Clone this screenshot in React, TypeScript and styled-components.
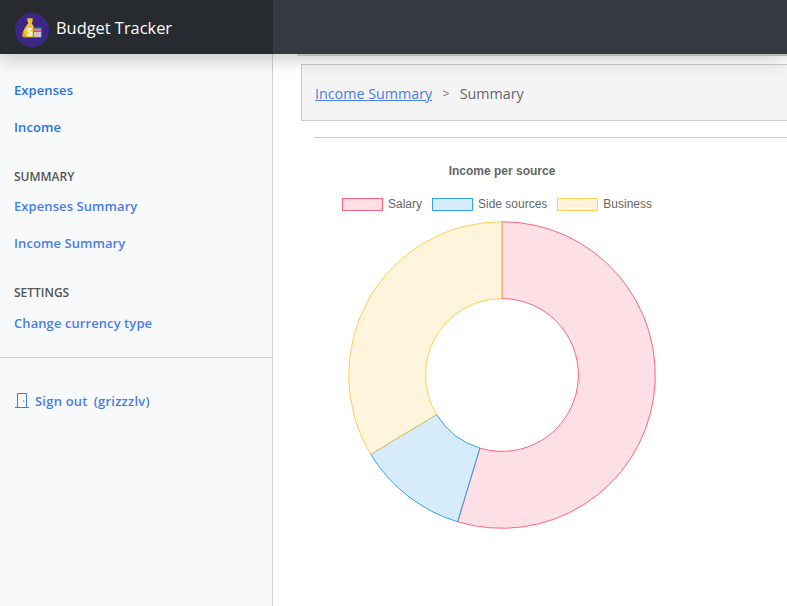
import React from "react";
import styled, { createGlobalStyle } from "styled-components";

const GlobalStyle = createGlobalStyle`
  html, body {
    margin: 0;
    padding: 0;
    height: 100%;
    overflow: hidden;
    background: #fff;
    font-family: "Open Sans", "Noto Sans", sans-serif;
  }
  #root { height: 100%; }
`;

const Page = styled.div`
  width: 787px;
  height: 606px;
  display: flex;
  flex-direction: column;
  overflow: hidden;
`;

const TopBar = styled.header`
  height: 54px;
  flex: none;
  display: flex;
  background: #343a40;
  box-shadow: 0 4px 20px rgba(0, 0, 0, 0.22);
  position: relative;
  z-index: 2;
  &::after {
    content: "";
    position: absolute;
    left: 297px;
    right: 0;
    top: 100%;
    height: 2px;
    background: #b9b9b9;
  }
`;

const Brand = styled.div`
  width: 273px;
  box-sizing: border-box;
  padding-left: 15px;
  display: flex;
  align-items: center;
  gap: 7px;
  background: #272b30;
  color: #fff;
  font-size: 16.4px;
`;

const Logo = styled.svg`
  margin-top: 6px;
  flex: none;
`;

const Body = styled.div`
  flex: 1;
  display: flex;
  min-height: 0;
`;

const Sidebar = styled.aside`
  width: 273px;
  flex: none;
  box-sizing: border-box;
  background: #f8f9fb;
  border-right: 1px solid #d0d0d0;
  padding-top: 18px;
`;

const NavLink = styled.a<{ $muted?: boolean }>`
  display: block;
  height: 37px;
  line-height: 36px;
  padding-left: 14px;
  font-size: 13px;
  font-weight: 600;
  letter-spacing: 0.08px;
  color: ${({ $muted }) => ($muted ? "#4a7de8" : "#2a72e0")};
  text-decoration: none;
`;

const NavHeading = styled.div`
  margin-top: 20px;
  height: 22.25px;
  line-height: 22px;
  padding-left: 14px;
  font-size: 12px;
  font-weight: 600;
  color: #555;
`;

const NavDivider = styled.hr`
  margin: 15px 0 0;
  border: 0;
  border-top: 1px solid #cdcdd2;
`;

const SignOut = styled.a`
  margin: 34px 0 0 15px;
  display: flex;
  align-items: center;
  gap: 6px;
  font-size: 13px;
  font-weight: 600;
  letter-spacing: 0.22px;
  color: #4a7de8;
`;

const Main = styled.main`
  flex: 1;
  min-width: 0;
  padding: 10px 0 0 28px;
`;

const Breadcrumb = styled.div`
  height: 57px;
  box-sizing: border-box;
  display: flex;
  align-items: center;
  gap: 10px;
  padding: 1px 0 0 13px;
  background: #f4f4f4;
  border: 1px solid #ccc;
  border-right: 0;
  font-size: 14.3px;
  color: #666;
`;

const CrumbLink = styled.a`
  color: #4a7de8;
  text-decoration: underline;
`;

const CrumbArrow = styled.span`
  font-size: 13px;
  color: #777;
`;

const Rule = styled.hr`
  margin: 16px 0 0 13px;
  border: 0;
  border-top: 1px solid #ccc;
`;

const Chart = styled.section`
  width: 402px;
  display: flex;
  flex-direction: column;
  align-items: center;
  font-family: "Liberation Sans", Arial, sans-serif;
`;

const ChartTitle = styled.div`
  margin-top: 26px;
  font-size: 12px;
  line-height: 14px;
  font-weight: 700;
  color: #666;
`;

const Legend = styled.div`
  margin: 19px 10px 0 0;
  display: flex;
  gap: 10px;
  font-size: 12px;
  line-height: 14px;
  color: #666;
`;

const LegendItem = styled.div`
  display: flex;
  align-items: center;
  gap: 5px;
`;

const Swatch = styled.span<{ $fill: string; $line: string }>`
  width: 41px;
  height: 13px;
  box-sizing: border-box;
  background: ${({ $fill }) => $fill};
  border: 1px solid ${({ $line }) => $line};
`;

const Donut = styled.svg`
  margin-top: 10px;
  display: block;
`;

const CX = 155;
const CY = 154;
const R = 153.3;
const INNER = 76.4;

function arc(from: number, to: number) {
  const pt = (r: number, a: number) => {
    const t = ((a - 90) * Math.PI) / 180;
    return `${(CX + r * Math.cos(t)).toFixed(2)} ${(CY + r * Math.sin(t)).toFixed(2)}`;
  };
  const large = to - from > 180 ? 1 : 0;
  return `M${pt(R, from)} A${R} ${R} 0 ${large} 1 ${pt(R, to)} L${pt(INNER, to)} A${INNER} ${INNER} 0 ${large} 0 ${pt(INNER, from)} Z`;
}

const slices = [
  { label: "Salary", fill: "rgba(255,99,132,0.2)", line: "#ff6384", from: 0, to: 196.8 },
  { label: "Side sources", fill: "rgba(54,162,235,0.2)", line: "#36a2eb", from: 196.8, to: 238.8 },
  { label: "Business", fill: "rgba(255,206,86,0.2)", line: "#ffce56", from: 238.8, to: 360 },
];

const BagIcon = () => (
  <Logo width="34" height="34" viewBox="0 0 34 34">
    <circle cx="17" cy="17" r="17" fill="#3d2785" />
    <path d="M12.300 5.300h5.400v2.400l-1 2.600c1 1.500 2 3 2.500 4.500v9.500H9c-1 0-1.500-.7-1.500-2 0-4 2.500-8 5.800-12l-1-2.600z" fill="#f2c230" />
    <path d="M8.500 17c-.6 1.700-1 3.500-1 5.300 0 1.300.5 2 1.500 2h2.500c-1.500-1.800-2.500-4.300-3-7.300z" fill="#dd9a22" />
    <text x="12" y="23" fontSize="10" fontWeight="700" fontFamily="Liberation Sans" fill="#fff">$</text>
    <rect x="18.300" y="14.700" width="8.400" height="10" fill="#2f8f9c" />
    <rect x="19.200" y="15.600" width="6.600" height="2.500" fill="#ee6fa0" />
    <rect x="19.200" y="19" width="6.600" height="4.800" fill="#bfe6dc" />
    <path d="M21.400 19v4.800M23.600 19v4.800" stroke="#ee9fc0" strokeWidth="1" />
  </Logo>
);

const DoorIcon = () => (
  <svg width="14" height="15" viewBox="0 0 14 15" fill="none" stroke="#3f7de8" strokeWidth="1">
    <path d="M0 14.500h14M2.500 14.500V0.500h9v14" />
    <rect x="8" y="7.500" width="1.200" height="1.200" fill="#3f7de8" stroke="none" />
  </svg>
);

export default function App() {
  return (
    <Page>
      <GlobalStyle />
      <TopBar>
        <Brand>
          <BagIcon />
          Budget Tracker
        </Brand>
      </TopBar>
      <Body>
        <Sidebar>
          <NavLink>Expenses</NavLink>
          <NavLink>Income</NavLink>
          <NavHeading>SUMMARY</NavHeading>
          <NavLink $muted>Expenses Summary</NavLink>
          <NavLink $muted>Income Summary</NavLink>
          <NavHeading>SETTINGS</NavHeading>
          <NavLink $muted>Change currency type</NavLink>
          <NavDivider />
          <SignOut>
            <DoorIcon />
            <span>Sign out</span>
            <span>(grizzzlv)</span>
          </SignOut>
        </Sidebar>
        <Main>
          <Breadcrumb>
            <CrumbLink>Income Summary</CrumbLink>
            <CrumbArrow>&gt;</CrumbArrow>
            <span>Summary</span>
          </Breadcrumb>
          <Rule />
          <Chart>
            <ChartTitle>Income per source</ChartTitle>
            <Legend>
              {slices.map((s) => (
                <LegendItem key={s.label}>
                  <Swatch $fill={s.fill} $line={s.line} />
                  {s.label}
                </LegendItem>
              ))}
            </Legend>
            <Donut width="310" height="310" viewBox="0 0 310 310">
              {slices.map((s) => (
                <path key={s.label} d={arc(s.from, s.to)} fill={s.fill} stroke={s.line} strokeWidth="1" />
              ))}
            </Donut>
          </Chart>
        </Main>
      </Body>
    </Page>
  );
}
